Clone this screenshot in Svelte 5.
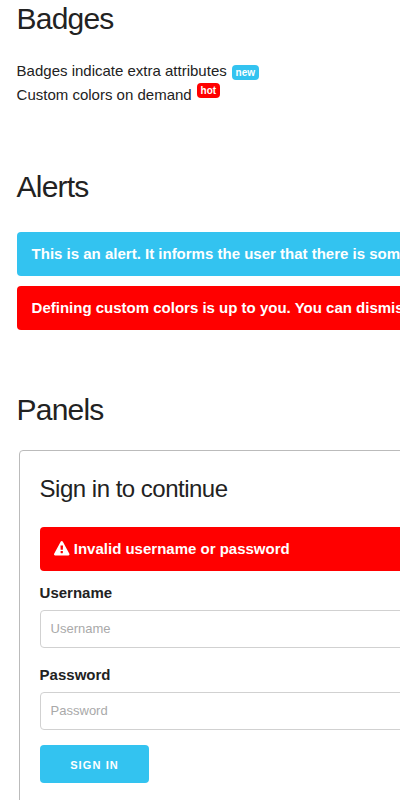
<script>
  const badges = [
    { text: 'Badges indicate extra attributes', label: 'new', kind: '' },
    { text: 'Custom colors on demand', label: 'hot', kind: 'hot' }
  ];
</script>

<main>
  <section class="badges">
    <h2>Badges</h2>
    {#each badges as b}
      <div class="line">{b.text} <span class="badge {b.kind}">{b.label}</span></div>
    {/each}
  </section>

  <section class="alerts">
    <h2>Alerts</h2>
    <div class="alert">This is an alert. It informs the user that there is something important.</div>
    <div class="alert danger">Defining custom colors is up to you. You can dismiss alerts as well.</div>
  </section>

  <section class="panels">
    <h2>Panels</h2>
    <form class="panel">
      <h3>Sign in to continue</h3>
      <div class="alert danger">
        <svg viewBox="0 0 1792 1792" width="15.5" height="15.5" aria-hidden="true"><path fill="currentColor" d="M1024 1375v-190q0-14-9.500-23.500t-22.500-9.500h-192q-13 0-22.500 9.500t-9.500 23.500v190q0 14 9.500 23.500t22.500 9.500h192q13 0 22.500-9.500t9.500-23.500zm-2-374l18-459q0-12-10-19-13-11-24-11h-220q-11 0-24 11-10 7-10 21l17 457q0 10 10 16.500t24 6.500h185q14 0 23.500-6.500t10.500-16.500zm-14-934l768 1408q35 63-2 126-17 29-46.500 46t-63.500 17h-1536q-34 0-63.500-17t-46.500-46q-37-63-2-126l768-1408q17-31 47-49t65-18 65 18 47 49z"/></svg>
        <span>Invalid username or password</span>
      </div>
      <label for="user">Username</label>
      <input id="user" type="text" placeholder="Username" />
      <label for="pass">Password</label>
      <input id="pass" type="password" placeholder="Password" />
      <button type="button">Sign in</button>
    </form>
  </section>
</main>

<style>
  :global(html), :global(body) { margin: 0; overflow: hidden; background: #fff; }
  main {
    box-sizing: border-box;
    width: 600px;
    height: 800px;
    overflow: hidden;
    padding-left: 16.6px;
    font: 15px/24px "Liberation Sans", Arial, sans-serif;
    color: #222;
  }
  h2, h3 { margin: 0; font-weight: 400; }
  h2 { font-size: 30px; line-height: 36px; letter-spacing: -0.8px; padding-top: 1px; }
  h3 { font-size: 24px; line-height: 30px; letter-spacing: -0.5px; }
  .badges { height: 168px; }
  .badges h2 { margin-bottom: 22px; }
  .line { height: 24px; white-space: nowrap; }
  .badge {
    display: inline-block;
    height: 15px;
    margin-left: 1px;
    padding: 0 3.7px;
    border-radius: 4px;
    background: #33c3f0;
    color: #fff;
    font-size: 10px;
    font-weight: 700;
    line-height: 15px;
  }
  .badge.hot { background: #f00; position: relative; top: -6px; }
  .alerts { height: 223px; }
  .alerts h2 { margin-bottom: 27px; }
  .alert {
    box-sizing: border-box;
    height: 44px;
    margin-bottom: 10px;
    padding: 10px 15px;
    border-radius: 4px;
    background: #33c3f0;
    color: #fff;
    font-weight: 700;
    white-space: nowrap;
  }
  .danger { background: #f00; }
  .panels h2 { margin-bottom: 22px; }
  .panel {
    box-sizing: border-box;
    height: 380px;
    margin-left: 2px;
    padding: 23px 20px;
    border: 1px solid #bbb;
    border-radius: 4px;
  }
  .panel h3 { margin-bottom: 23px; }
  .panel .alert { display: flex; gap: 4.1px; padding-left: 14.6px; }
  svg { margin-top: 4px; }
  label { display: block; height: 29px; font-weight: 700; }
  input {
    display: block;
    box-sizing: border-box;
    width: 100%;
    height: 38px;
    margin: 0 0 15px;
    padding: 5px 10px 7px;
    border: 1px solid #d1d1d1;
    border-radius: 4px;
    background: #fff;
    font: 13px "Liberation Sans", Arial, sans-serif;
  }
  input::placeholder { color: #a9a9a9; }
  button {
    height: 38px;
    padding: 1px 30px 0 30.6px;
    border: 0;
    border-radius: 4px;
    background: #33c3f0;
    color: #fff;
    font: 700 11px/38px "Liberation Sans", Arial, sans-serif;
    letter-spacing: 1.1px;
    text-transform: uppercase;
  }
</style>
